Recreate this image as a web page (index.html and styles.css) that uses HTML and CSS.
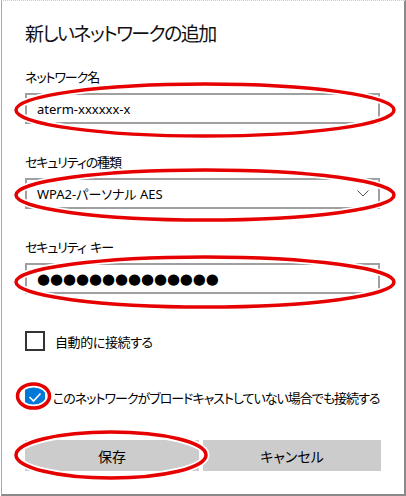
FILE: index.html
```html
<!DOCTYPE html>
<html lang="ja">
<head>
  <meta charset="UTF-8" />
  <title>新しいネットワークの追加</title>
  <link rel="stylesheet" href="styles.css">
</head>
<body>
  <div class="dialog">
    <h1 class="title">新しいネットワークの追加</h1>

    <div class="field first">
      <div class="label">ネットワーク名</div>
      <div class="box">aterm-xxxxxx-x</div>
    </div>

    <div class="field">
      <div class="label">セキュリティの種類</div>
      <div class="box select">
        <span>WPA2-パーソナル AES</span>
        <svg class="chevron" width="12" height="7" viewBox="0 0 12 7">
          <polyline points="0.5,0.5 6,6 11.5,0.5" fill="none" stroke="#555" stroke-width="1" />
        </svg>
      </div>
    </div>

    <div class="field">
      <div class="label">セキュリティ&nbsp; キー</div>
      <div class="box password"><span class="dots">●●●●●●●●●●●●●●</span></div>
    </div>

    <div class="check first-check">
      <span class="checkbox"></span>
      <span class="check-text short">自動的に接続する</span>
    </div>

    <div class="check second-check">
      <span class="checkbox checked">
        <svg width="20" height="20" viewBox="0 0 20 20">
          <polyline points="4.5,10 8.5,14 15.5,6.5" fill="none" stroke="#fff" stroke-width="1.6" />
        </svg>
      </span>
      <span class="check-text">このネットワークがブロードキャストしていない場合でも接続する</span>
    </div>

    <div class="buttons">
      <div class="btn">保存</div>
      <div class="btn">キャンセル</div>
    </div>

    <!-- red annotation marks drawn over the dialog -->
    <svg class="marks" width="406" height="496" viewBox="0 0 406 496">
      <g fill="none" stroke="#fff" stroke-width="7">
        <ellipse cx="205" cy="110" rx="189" ry="26" />
        <ellipse cx="205" cy="195" rx="189" ry="25" />
        <ellipse cx="205" cy="282" rx="189" ry="25" />
        <ellipse cx="33.5" cy="396" rx="16" ry="12" />
        <ellipse cx="111" cy="455" rx="95" ry="23" />
      </g>
      <g fill="none" stroke="#e60000" stroke-width="3.5">
        <ellipse cx="205" cy="110" rx="189" ry="26" />
        <ellipse cx="205" cy="195" rx="189" ry="25" />
        <ellipse cx="205" cy="282" rx="189" ry="25" />
        <ellipse cx="33.5" cy="396" rx="16" ry="12" />
        <ellipse cx="111" cy="455" rx="95" ry="23" />
      </g>
    </svg>
  </div>
</body>
</html>
```

FILE: styles.css
```css
body {
  margin: 0;
  background: #fff;
  font-family: "Noto Sans", "Noto Sans CJK JP", sans-serif;
  font-feature-settings: "palt";
  color: #000;
}

.dialog {
  position: relative;
  box-sizing: border-box;
  width: 405px;
  height: 496px;
  margin-left: 1px;
  padding: 21px 0 0 23px;
  border-left: 1px solid #a8a8a8;
  border-right: 2px solid #8a8a8a;
  border-bottom: 2px solid #8a8a8a;
  border-top: 1px dotted #c8c8c8;
}

.title {
  margin: 0;
  font-size: 19px;
  font-weight: normal;
  line-height: 24px;
  letter-spacing: -1.6px;
  color: #111;
}

.field {
  margin-top: 29px;
}

.field.first {
  margin-top: 22px;
}

.label {
  font-size: 13px;
  line-height: 18px;
  letter-spacing: -1.1px;
  margin-bottom: 7px;
}

.box {
  box-sizing: border-box;
  width: 355px;
  height: 31px;
  border: 2px solid #a0a0a0;
  padding: 0 10px;
  display: flex;
  align-items: center;
  font-size: 13px;
}

.select {
  justify-content: space-between;
  padding-right: 9px;
}

.chevron {
  display: block;
}

.dots {
  font-family: "DejaVu Sans", sans-serif;
  font-size: 15px;
  letter-spacing: -0.1px;
}

.check {
  display: flex;
  align-items: center;
  gap: 10px;
  font-size: 13px;
}

.check-text {
  white-space: nowrap;
  letter-spacing: -1px;
}

.check-text.short {
  letter-spacing: -0.4px;
}

.first-check {
  margin-top: 37px;
}

.second-check {
  margin-top: 36px;
  gap: 8px;
}

.checkbox {
  flex-shrink: 0;
  box-sizing: border-box;
  width: 20px;
  height: 20px;
  border: 2px solid #333;
  background: #fff;
}

.checkbox.checked {
  border: none;
  background: #0078d7;
}

.checkbox svg {
  display: block;
}

.buttons {
  margin-top: 33px;
  width: 356px;
  display: grid;
  grid-template-columns: 174px 178px;
  gap: 4px;
}

.btn {
  height: 31px;
  background: #ccc;
  display: flex;
  align-items: center;
  justify-content: center;
  font-size: 14px;
}

.marks {
  position: absolute;
  left: -2px;
  top: -1px;
  pointer-events: none;
}
```
